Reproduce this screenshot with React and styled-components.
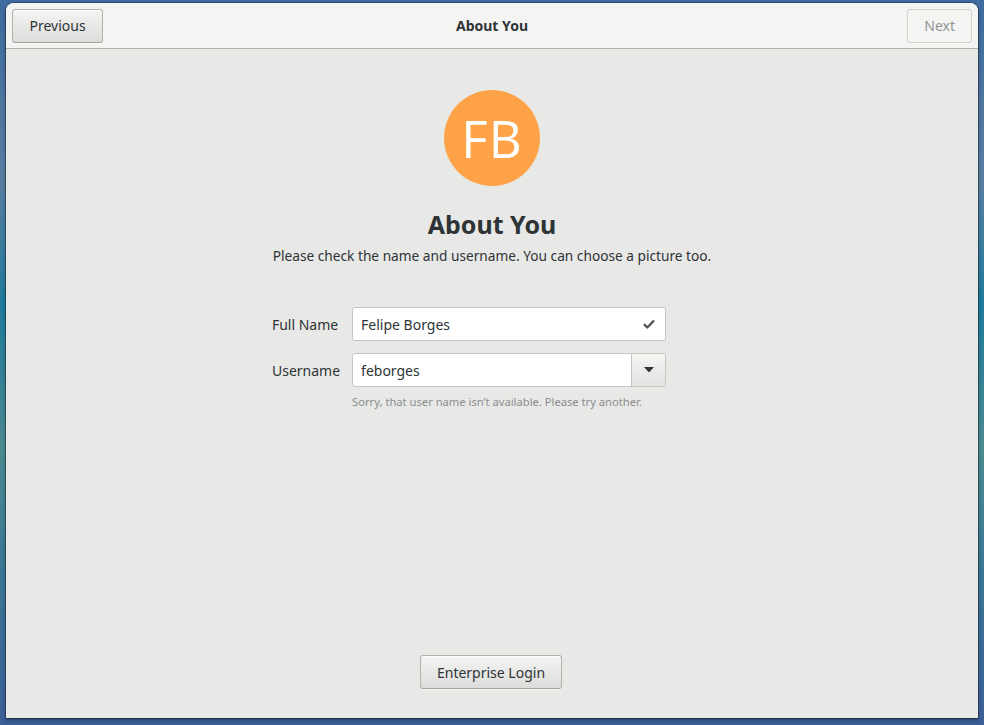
import styled, { createGlobalStyle } from "styled-components";

const GlobalStyle = createGlobalStyle`
  html, body {
    margin: 0;
    padding: 0;
  }
  body {
    font-family: "Noto Sans", "DejaVu Sans", sans-serif;
    color: #2e3436;
  }
`;

const Desktop = styled.div`
  width: 984px;
  height: 725px;
  box-sizing: border-box;
  padding: 3px 6px 7px 6px;
  display: flex;
  background: linear-gradient(
    180deg,
    #3f6b9e 0%,
    #5a7fa3 25%,
    #1f7b9c 42%,
    #4d8b92 62%,
    #3a7596 80%,
    #3c5f98 100%
  );
  overflow: hidden;
`;

const Window = styled.div`
  flex: 1;
  display: flex;
  flex-direction: column;
  background: #e8e8e7;
  border-radius: 8px 8px 0 0;
  box-shadow: 0 0 0 1px rgba(0, 0, 0, 0.28), 0 2px 4px rgba(0, 0, 0, 0.35);
  overflow: hidden;
`;

const HeaderBar = styled.header`
  height: 45px;
  flex-shrink: 0;
  display: grid;
  grid-template-columns: 1fr auto 1fr;
  align-items: center;
  padding: 0 6px;
  background: #f4f4f3;
  border-bottom: 1px solid #b0b0ac;
`;

const HeaderSide = styled.div`
  display: flex;
  justify-content: ${({ $end }) => ($end ? "flex-end" : "flex-start")};
`;

const HeaderTitle = styled.div`
  font-size: 14px;
  font-weight: 700;
  color: #2e3436;
`;

const Button = styled.button`
  font-family: inherit;
  font-size: 14px;
  height: 34px;
  padding: 0 ${({ $pad }) => $pad || 16}px;
  border-radius: 3px;
  border: 1px solid ${({ disabled }) => (disabled ? "#d2d2cf" : "#b2b2ae")};
  border-bottom-color: ${({ disabled }) => (disabled ? "#d2d2cf" : "#a2a29e")};
  color: ${({ disabled }) => (disabled ? "#929595" : "#2e3436")};
  background: ${({ disabled }) =>
    disabled ? "#f4f4f3" : "linear-gradient(180deg, #f4f4f3 0%, #e6e6e4 60%, #dcdcda 100%)"};
  box-shadow: ${({ disabled }) =>
    disabled ? "none" : "inset 0 1px rgba(255,255,255,0.8), 0 1px rgba(255,255,255,0.6)"};
`;

const Content = styled.main`
  flex: 1;
  display: flex;
  flex-direction: column;
  align-items: center;
  padding: 41px 0 29px;
`;

const Avatar = styled.div`
  width: 96px;
  height: 96px;
  border-radius: 50%;
  background: #ffa348;
  color: #ffffff;
  display: grid;
  place-items: center;
  font-family: "Open Sans", "Noto Sans", sans-serif;
  font-weight: 400;
  font-size: 51px;
  letter-spacing: 1px;
  line-height: 1;
`;

const Title = styled.h1`
  margin: 23px 0 0;
  font-size: 25px;
  line-height: 30px;
  font-weight: 700;
  color: #2e3436;
`;

const Subtitle = styled.p`
  margin: 7px 0 0;
  font-size: 13.7px;
  line-height: 20px;
  color: #2e3436;
`;

const Form = styled.div`
  margin: 41px 46px 0 0;
  display: grid;
  grid-template-columns: auto 314px;
  column-gap: 12px;
  row-gap: 12px;
  align-items: center;
`;

const Label = styled.label`
  font-size: 14px;
  color: #2e3436;
`;

const Entry = styled.div`
  height: 34px;
  box-sizing: border-box;
  display: flex;
  align-items: stretch;
  background: #ffffff;
  border: 1px solid #c6c6c2;
  border-radius: 3px;
  overflow: hidden;
`;

const EntryText = styled.span`
  flex: 1;
  display: flex;
  align-items: center;
  padding-left: 8px;
  font-size: 14px;
  color: #2e3436;
`;

const EntryIcon = styled.span`
  width: 32px;
  display: grid;
  place-items: center;
`;

const ComboButton = styled.span`
  width: 33px;
  display: grid;
  place-items: center;
  border-left: 1px solid #c6c6c2;
  background: linear-gradient(180deg, #f4f4f3 0%, #e4e4e2 100%);
`;

const Hint = styled.div`
  grid-column: 2;
  margin-top: -5px;
  font-size: 11.2px;
  line-height: 15px;
  color: #8b8e8f;
`;

const Footer = styled.div`
  margin-top: auto;
  margin-right: 2px;
`;

export default function App() {
  return (
    <>
      <GlobalStyle />
      <Desktop>
        <Window>
          <HeaderBar>
            <HeaderSide>
              <Button $pad={16.5}>Previous</Button>
            </HeaderSide>
            <HeaderTitle>About You</HeaderTitle>
            <HeaderSide $end>
              <Button disabled $pad={16}>Next</Button>
            </HeaderSide>
          </HeaderBar>
          <Content>
            <Avatar>FB</Avatar>
            <Title>About You</Title>
            <Subtitle>Please check the name and username. You can choose a picture too.</Subtitle>
            <Form>
              <Label>Full Name</Label>
              <Entry>
                <EntryText>Felipe Borges</EntryText>
                <EntryIcon>
                  <svg width="12" height="10" viewBox="0 0 12 10">
                    <path d="M1 5.2 L4.3 8.5 L11 1.5" fill="none" stroke="#555753" strokeWidth="2.4" strokeLinejoin="round" />
                  </svg>
                </EntryIcon>
              </Entry>
              <Label>Username</Label>
              <Entry>
                <EntryText>feborges</EntryText>
                <ComboButton>
                  <svg width="10" height="6" viewBox="0 0 10 6">
                    <path d="M0 0 H10 L5 5.5 Z" fill="#2e3436" />
                  </svg>
                </ComboButton>
              </Entry>
              <Hint>Sorry, that user name isn’t available. Please try another.</Hint>
            </Form>
            <Footer>
              <Button $pad={16}>Enterprise Login</Button>
            </Footer>
          </Content>
        </Window>
      </Desktop>
    </>
  );
}
